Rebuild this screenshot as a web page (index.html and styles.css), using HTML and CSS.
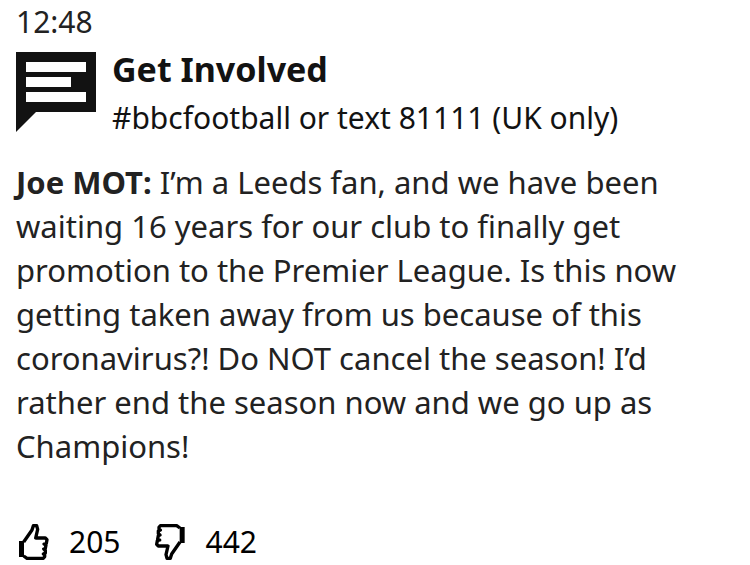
FILE: index.html
```html
<!DOCTYPE html>
<html lang="en">
<head>
  <meta charset="UTF-8" />
  <meta name="viewport" content="width=device-width, initial-scale=1" />
  <title>Get Involved</title>
  <link rel="stylesheet" href="styles.css">
</head>
<body>
  <article class="post">
    <time class="time" datetime="12:48">12:48</time>

    <header class="post-header">
      <svg class="speech-icon" viewBox="0 0 80 80" aria-hidden="true">
        <path fill="#121212" d="M0 0H80V60H20L0 80Z" />
        <path fill="#fff" d="M10 10H70V20H10ZM10 25H55V35H10ZM10 40H70V50H10Z" />
      </svg>
      <div>
        <h3 class="title">Get Involved</h3>
        <p class="subtitle">#bbcfootball or text 81111 (UK only)</p>
      </div>
    </header>

    <p class="comment"><strong>Joe MOT:</strong> I’m a Leeds fan, and we have been waiting 16 years for our club to finally get promotion to the Premier League. Is this now getting taken away from us because of this coronavirus?! Do NOT cancel the season! I’d rather end the season now and we go up as Champions!</p>

    <div class="votes">
      <button class="vote" type="button" aria-label="Like, 205">
        <svg class="thumb" viewBox="0 0 90 108" aria-hidden="true">
          <path d="M0 51H15V99H0Z" />
          <path class="outline" d="M14 54L39 18L43 5H53L56 16L50 42H79L84 47L82 58L75 60L81 63L79 73L74 75L79 79V87L73 90L77 93V98L73 103H24L14 96" />
        </svg>
        <span>205</span>
      </button>
      <button class="vote" type="button" aria-label="Dislike, 442">
        <svg class="thumb" viewBox="0 0 90 108" aria-hidden="true">
          <path d="M74 9H89V57H74Z" />
          <path class="outline" d="M75 54L50 90L46 103H36L33 92L39 66H10L5 61L7 50L14 48L8 45L10 35L15 33L10 29V21L16 18L12 15V10L16 5H65L75 12" />
        </svg>
        <span>442</span>
      </button>
    </div>
  </article>
</body>
</html>
```

FILE: styles.css
```css
body {
  margin: 0;
  font-family: "Noto Sans", sans-serif;
  font-size: 30px;
  line-height: 44px;
  background: #fff;
  color: #222;
}

.post {
  padding: 0 16px;
}

.time {
  display: block;
}

.post-header {
  display: flex;
  gap: 16px;
  padding-top: 4px;
  color: #121212;
}

.speech-icon {
  width: 80px;
  height: 80px;
  margin-top: 4px;
  flex-shrink: 0;
}

.title {
  margin: 0;
  font-size: 34px;
  line-height: 42px;
}

.subtitle {
  margin: 6px 0 0;
}

.comment {
  margin: 20px 0 52px;
  font-size: 31px;
}

.votes {
  display: flex;
  gap: 32px;
}

.vote {
  display: flex;
  align-items: center;
  gap: 20px;
  padding: 0 0 0 3px;
  border: 0;
  background: none;
  color: #000;
  font: inherit;
  cursor: pointer;
}

.thumb {
  width: 30px;
  height: 36px;
}

.outline {
  fill: none;
  stroke: #000;
  stroke-width: 10;
  stroke-linejoin: round;
}
```
